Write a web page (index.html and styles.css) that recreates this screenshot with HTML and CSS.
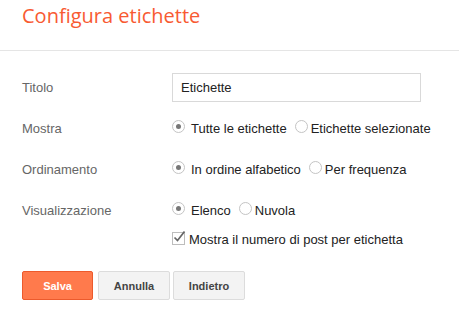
FILE: index.html
```html
<!DOCTYPE html>
<html lang="it">
<head>
  <meta charset="UTF-8" />
  <title>Configura etichette</title>
  <link rel="stylesheet" href="styles.css">
</head>
<body>

  <!-- Header -->
  <div class="header">
    <h1>Configura etichette</h1>
  </div>

  <!-- Form -->
  <div class="form">
    <div class="row row-title">
      <div class="label">Titolo</div>
      <div class="value">
        <input class="text-input" type="text" value="Etichette">
      </div>
    </div>

    <div class="row">
      <div class="label">Mostra</div>
      <div class="value">
        <span class="opt first"><span class="radio checked"></span>Tutte le etichette</span>
        <span class="opt"><span class="radio"></span>Etichette selezionate</span>
      </div>
    </div>

    <div class="row">
      <div class="label">Ordinamento</div>
      <div class="value">
        <span class="opt first"><span class="radio checked"></span>In ordine alfabetico</span>
        <span class="opt"><span class="radio"></span>Per frequenza</span>
      </div>
    </div>

    <div class="row row-top">
      <div class="label">Visualizzazione</div>
      <div class="value stack">
        <div class="line">
          <span class="opt first"><span class="radio checked"></span>Elenco</span>
          <span class="opt"><span class="radio"></span>Nuvola</span>
        </div>
        <div class="line">
          <span class="opt check-opt">
            <span class="checkbox">
              <svg width="14" height="14" viewBox="0 0 14 14"><path d="M2.5 7.5 L5.5 10.5 L12.5 1.5" fill="none" stroke="#666" stroke-width="1.7"/></svg>
            </span>Mostra il numero di post per etichetta
          </span>
        </div>
      </div>
    </div>

    <div class="buttons">
      <button class="btn btn-primary">Salva</button>
      <button class="btn">Annulla</button>
      <button class="btn btn-last">Indietro</button>
    </div>
  </div>

</body>
</html>
```

FILE: styles.css
```css
body {
  margin: 0;
  font-family: Arial, "Liberation Sans", sans-serif;
  background: #fff;
}

.header {
  height: 50px;
  border-bottom: 1px solid #e5e5e5;
  padding-left: 22px;
}

.header h1 {
  margin: 0;
  padding-top: 2px;
  font-family: "Open Sans", sans-serif;
  font-weight: normal;
  font-size: 20px;
  line-height: 27px;
  color: #f85a32;
}

.form {
  padding: 22px 22px 0 22px;
}

.row {
  display: flex;
  align-items: center;
  height: 29px;
  margin-top: 12px;
}

.row-title {
  margin-top: 0;
}

.row-top {
  align-items: flex-start;
  height: auto;
}

.label {
  width: 150px;
  font-size: 13px;
  line-height: 29px;
  color: #666;
}

.value {
  display: flex;
  align-items: center;
  font-size: 13px;
  color: #222;
}

.stack {
  flex-direction: column;
  align-items: flex-start;
}

.line {
  display: flex;
  align-items: center;
  height: 29px;
}

.text-input {
  box-sizing: border-box;
  width: 249px;
  height: 29px;
  border: 1px solid #d9d9d9;
  padding: 0 8px;
  font-family: Arial, "Liberation Sans", sans-serif;
  font-size: 13px;
  color: #222;
  outline: none;
}

.opt {
  display: inline-flex;
  align-items: center;
}

.radio {
  box-sizing: border-box;
  width: 13px;
  height: 13px;
  border: 1px solid #c4c4c4;
  border-radius: 50%;
  margin: 0 3px 5px 8px;
  position: relative;
  background: #fff;
}

.first .radio {
  margin-left: 0;
  margin-right: 6px;
}

.radio.checked::after {
  content: "";
  position: absolute;
  left: 3px;
  top: 3px;
  width: 5px;
  height: 5px;
  border-radius: 50%;
  background: #777;
}

.checkbox {
  box-sizing: border-box;
  width: 13px;
  height: 13px;
  border: 1px solid #bdbdbd;
  margin: 0 4px 3px 0;
  position: relative;
  background: #fff;
}

.checkbox svg {
  position: absolute;
  left: -1px;
  top: -3px;
}

.buttons {
  display: flex;
  gap: 5px;
  margin-top: 17px;
}

.btn {
  box-sizing: border-box;
  width: 72px;
  height: 29px;
  border: 1px solid #dcdcdc;
  border-radius: 2px;
  background: #f3f3f3;
  font-family: Arial, "Liberation Sans", sans-serif;
  font-size: 11px;
  font-weight: bold;
  color: #444;
  padding: 0;
}

.btn-last {
  margin-left: -2px;
}

.btn-primary {
  width: 71px;
  background: #ff7a4c;
  border-color: #ec5a2c;
  color: #fff;
}
```
